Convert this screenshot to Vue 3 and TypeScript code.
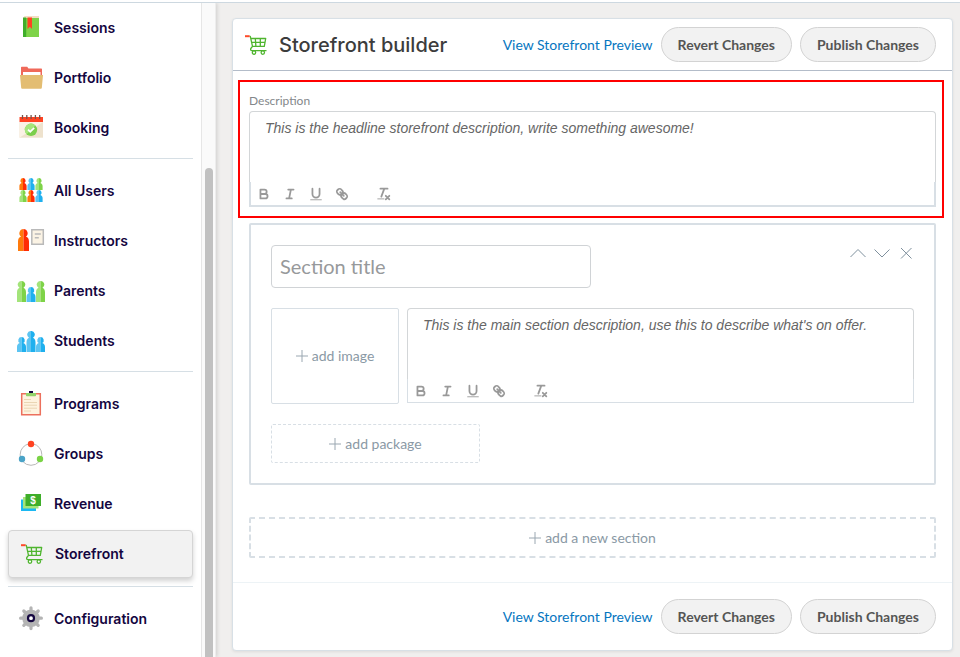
<script setup lang="ts">
import { ref } from 'vue'

interface NavItem {
  label: string
  icon: string
}

const groups: NavItem[][] = [
  [
    { label: 'Sessions', icon: 'sessions' },
    { label: 'Portfolio', icon: 'portfolio' },
    { label: 'Booking', icon: 'booking' },
  ],
  [
    { label: 'All Users', icon: 'users' },
    { label: 'Instructors', icon: 'instructors' },
    { label: 'Parents', icon: 'parents' },
    { label: 'Students', icon: 'students' },
  ],
  [
    { label: 'Programs', icon: 'programs' },
    { label: 'Groups', icon: 'groups' },
    { label: 'Revenue', icon: 'revenue' },
    { label: 'Storefront', icon: 'storefront' },
  ],
  [{ label: 'Configuration', icon: 'configuration' }],
]

const tools = ['bold', 'italic', 'underline', 'link', 'clean']

const current = ref('Storefront')
const headline = ref('')
const sectionTitle = ref('')
const sectionText = ref('')
</script>

<template>
  <svg class="sprite" aria-hidden="true">
    <symbol id="person-short" viewBox="0 0 9 15">
      <path d="M4.500 0a3.300 3.300 0 0 0-1.700 6.100C1 6.700 0 8 0 10v5h4.500z" fill="var(--light)" />
      <path d="M4.500 0a3.300 3.300 0 0 1 1.700 6.100C8 6.700 9 8 9 10v5H4.500z" fill="var(--dark)" />
    </symbol>
    <symbol id="person-tall" viewBox="0 0 9 21">
      <path d="M4.500 0a3.600 3.600 0 0 0-2 6.700C.8 7.400 0 9 0 11.500V21h4.500z" fill="var(--light)" />
      <path d="M4.500 0a3.600 3.600 0 0 1 2 6.700C8.200 7.400 9 9 9 11.500V21H4.500z" fill="var(--dark)" />
    </symbol>
    <symbol id="cart" viewBox="0 0 22 20">
      <path
        d="M4.500 1.300h.8L7.500 11.300l-1.700 2.200q-.6 2.100 1 2.100h14.700M5.700 3.500h15l-1.400 7.800H7.500M6.500 7.300h13.500M10.300 3.500l.6 7.800M15.300 3.500v7.800"
        fill="none" stroke="#4fb52f" stroke-width="1.300" stroke-linejoin="round"
      />
      <g fill="#fff" stroke="#4fb52f" stroke-width="1.300">
        <circle cx="9" cy="17.600" r="1.700" />
        <circle cx="17.800" cy="17.600" r="1.700" />
      </g>
      <path d="M0 1.200h4.600" stroke="#ff4a2a" stroke-width="2" />
    </symbol>

    <symbol id="nav-sessions" viewBox="0 0 28 28">
      <path d="M7.500 2H22v2.500H6z" fill="#f4ddc4" />
      <path d="M6 4h16v19H6z" fill="#7ed348" />
      <path d="M6 3.500h3.200V23H6z" fill="#3fae2a" />
      <path d="M10.500 3.500H15V15l-2.200-2.300-2.300 2.300z" fill="#ff4322" />
    </symbol>
    <symbol id="nav-portfolio" viewBox="0 0 28 28">
      <path d="M4 3.500q0-.7.700-.7h5.500l1.300 1.700h12.800q.7 0 .7.700V14H4z" fill="#f0695a" />
      <path d="M6 8h17.500v4H6z" fill="#fff" />
      <path d="M3 11h23l-1.200 13q-.1.800-1 .8H5.200q-.9 0-1-.8z" fill="#e3bd72" />
    </symbol>
    <symbol id="nav-booking" viewBox="0 0 28 28">
      <path d="M2.500 8H26v15.700H2.500z" fill="#eee2cd" />
      <path d="M2.500 8H26L2.500 23.700z" fill="#fbf2e5" />
      <path d="M2.500 3H26v5H2.500z" fill="#ff4322" />
      <path d="M5.500 1v4M9.800 1v4M14.100 1v4M18.400 1v4M22.700 1v4" stroke="#77534b" stroke-width="1.300" />
      <circle cx="14" cy="15.800" r="6.200" fill="#7ccf4c" />
      <path d="M18.400 11.400a6.200 6.200 0 0 0-8.800 8.800z" fill="#a6e67c" />
      <path d="m11 15.600 2.200 2.100 4-3.900" fill="none" stroke="#fff" stroke-width="1.700" />
    </symbol>
    <symbol id="nav-users" viewBox="0 0 28 28">
      <use class="red" href="#person-short" x="2" y="1" width="8" height="12" />
      <use class="blue" href="#person-short" x="10" y="1" width="8" height="12" />
      <use class="green" href="#person-short" x="18" y="1" width="8" height="12" />
      <use class="green" href="#person-short" x="2" y="13" width="8" height="12" />
      <use class="red" href="#person-short" x="10" y="13" width="8" height="12" />
      <use class="blue" href="#person-short" x="18" y="13" width="8" height="12" />
    </symbol>
    <symbol id="nav-instructors" viewBox="0 0 28 28">
      <path d="M6.500 2a4.200 4.200 0 0 0-2.400 7.600C2 10.300 1 12 1 14.500V24h5.500z" fill="#ff7a0c" />
      <path d="M6.500 2a4.200 4.200 0 0 1 2.400 7.600c2.100.7 3.100 2.400 3.100 4.900V24H6.500z" fill="#ff2c05" />
      <path d="M14.800 2.700h11.500v14.600H14.800z" fill="#fbf3e4" stroke="#b9b9b9" stroke-width="1.500" />
      <path d="M17.800 7h6M17.800 10.800h4" stroke="#b9b9b9" stroke-width="1.400" />
    </symbol>
    <symbol id="nav-parents" viewBox="0 0 28 28">
      <use class="green" href="#person-tall" x="0" y="4" width="9" height="21" />
      <use class="green" href="#person-tall" x="19" y="4" width="9" height="21" />
      <use class="blue" href="#person-short" x="9" y="10" width="10" height="15" />
    </symbol>
    <symbol id="nav-students" viewBox="0 0 28 28">
      <use class="blue" href="#person-short" x="0" y="10" width="9" height="15" />
      <use class="blue" href="#person-short" x="19" y="10" width="9" height="15" />
      <use class="blue" href="#person-tall" x="9" y="4" width="10" height="21" />
    </symbol>
    <symbol id="nav-programs" viewBox="0 0 28 28">
      <path d="M4.700 3.700h18.600v21H4.700z" fill="#fef3df" stroke="#ec705d" stroke-width="1.500" />
      <path d="M9 3h10v2.500q0 .8-.8.800H9.800q-.8 0-.8-.8z" fill="#92d36a" />
      <path d="M12 1h4v2h-4z" fill="#14063f" />
      <path d="M7 9.500h7M7 12.500h13M7 15.200h13M7 18.200h13M7 21h7" stroke="#ead6b4" stroke-width="1" />
    </symbol>
    <symbol id="nav-groups" viewBox="0 0 28 28">
      <circle cx="14" cy="14.500" r="10.800" fill="none" stroke="#b8b8b8" stroke-width="1" stroke-dasharray="18.600 4" stroke-dashoffset="-2" transform="rotate(-90 14 14.500)" />
      <circle cx="14" cy="4" r="3.200" fill="#ff4322" />
      <circle cx="5" cy="19" r="3.200" fill="#4aa3c7" />
      <circle cx="23" cy="19" r="3.200" fill="#7ad345" />
    </symbol>
    <symbol id="nav-revenue" viewBox="0 0 28 28">
      <path d="M4 9.500h15v11.500H4z" fill="#1bb8f2" />
      <path d="M6 7h15.500v11.500H6z" fill="#a5e57b" />
      <path d="M8.500 4H24v12H8.500z" fill="#3fae2a" />
    </symbol>
    <symbol id="nav-storefront" viewBox="0 0 28 28">
      <use href="#cart" x="3" y="4" width="22" height="20" />
    </symbol>
    <symbol id="nav-configuration" viewBox="0 0 28 28">
      <circle cx="14" cy="13.200" r="8.800" fill="#b4b4b4" />
      <path
        d="M14 2.800v20.800M3.600 13.200h20.800M6.800 6l14.400 14.400M21.200 6 6.800 20.400"
        stroke="#b4b4b4" stroke-width="3.200" stroke-linecap="round"
      />
      <circle cx="14" cy="13.200" r="3" fill="#fff" stroke="#14063f" stroke-width="2.200" />
    </symbol>

    <symbol id="tool-bold" viewBox="0 0 18 18">
      <path d="M5 4h4.500a2.500 2.500 0 0 1 0 5H5zM5 9h5.500a2.500 2.500 0 0 1 0 5H5z" />
    </symbol>
    <symbol id="tool-italic" viewBox="0 0 18 18">
      <path d="M7 4h6M5 14h6M8 14l2-10" />
    </symbol>
    <symbol id="tool-underline" viewBox="0 0 18 18">
      <path d="M5 3v6a4 4 0 0 0 8 0V3" />
      <path d="M3 15.500h12" stroke-width="1" />
    </symbol>
    <symbol id="tool-link" viewBox="0 0 18 18">
      <path d="m7 7 4 4" />
      <path d="M8.900 4.577a3.476 3.476 0 0 1 .36 4.679A3.476 3.476 0 0 1 4.577 8.900C3.185 7.500 2.035 6.400 4.217 4.217S7.500 3.185 8.900 4.577Z" />
      <path d="M13.423 9.100a3.476 3.476 0 0 0-4.679-.36 3.476 3.476 0 0 0 .36 4.679c1.392 1.392 2.500 2.542 4.679.36S14.815 10.500 13.423 9.100Z" />
    </symbol>
    <symbol id="tool-clean" viewBox="0 0 18 18">
      <path d="M5 3h8M6 12l3.350-9M11 11l4 4M15 11l-4 4" />
      <path d="M2 14.500h7" stroke-width="1" />
    </symbol>
  </svg>

  <div class="page">
    <aside class="sidebar">
      <nav class="nav" aria-label="Main">
        <ul v-for="(group, index) in groups" :key="index" class="nav-group">
          <li v-for="item in group" :key="item.label">
            <a
              class="nav-link"
              :class="{ active: item.label === current }"
              href="#"
              @click.prevent="current = item.label"
            >
              <svg class="nav-icon" aria-hidden="true">
                <use :href="'#nav-' + item.icon" />
                <text v-if="item.icon === 'revenue'" class="dollar" x="16" y="14" text-anchor="middle">$</text>
              </svg>
              <span>{{ item.label }}</span>
            </a>
          </li>
        </ul>
      </nav>
      <div class="track"><div class="thumb"></div></div>
    </aside>

    <main class="main">
      <section class="card">
        <header class="card-head">
          <svg class="cart" aria-hidden="true"><use href="#cart" /></svg>
          <h1>Storefront builder</h1>
          <div class="actions">
            <a href="#">View Storefront Preview</a>
            <button type="button" class="pill">Revert Changes</button>
            <button type="button" class="pill">Publish Changes</button>
          </div>
        </header>

        <div class="highlight">
          <label class="label" for="headline">Description</label>
          <div class="editor editor-strong">
            <textarea
              id="headline"
              v-model="headline"
              placeholder="This is the headline storefront description, write something awesome!"
            ></textarea>
            <div class="toolbar">
              <button v-for="tool in tools" :key="tool" type="button" class="tool" :class="tool" :aria-label="tool">
                <svg aria-hidden="true"><use :href="'#tool-' + tool" /></svg>
              </button>
            </div>
          </div>
        </div>

        <div class="body">
          <div class="section">
            <div class="section-head">
              <input v-model="sectionTitle" class="title-input" type="text" placeholder="Section title" aria-label="Section title" />
              <div class="section-tools">
                <button type="button" aria-label="Move up">
                  <svg viewBox="0 0 16 16"><path d="m.5 12 7.500-7.500 7.500 7.500" /></svg>
                </button>
                <button type="button" aria-label="Move down">
                  <svg viewBox="0 0 16 16"><path d="m.5 4.500 7.500 7.500 7.500-7.500" /></svg>
                </button>
                <button type="button" aria-label="Remove">
                  <svg viewBox="0 0 16 16"><path d="m3 3 10.500 10.500M13.500 3 3 13.500" /></svg>
                </button>
              </div>
            </div>

            <div class="section-row">
              <button type="button" class="add add-image">
                <svg class="plus" viewBox="0 0 12 12" aria-hidden="true"><path d="M6 0v12M0 6h12" /></svg>
                add image
              </button>
              <div class="editor">
                <textarea
                  v-model="sectionText"
                  aria-label="Section description"
                  placeholder="This is the main section description, use this to describe what's on offer."
                ></textarea>
                <div class="toolbar">
                  <button v-for="tool in tools" :key="tool" type="button" class="tool" :class="tool" :aria-label="tool">
                    <svg aria-hidden="true"><use :href="'#tool-' + tool" /></svg>
                  </button>
                </div>
              </div>
            </div>

            <button type="button" class="add add-package">
              <svg class="plus" viewBox="0 0 12 12" aria-hidden="true"><path d="M6 0v12M0 6h12" /></svg>
              add package
            </button>
          </div>

          <button type="button" class="add add-section">
            <svg class="plus" viewBox="0 0 12 12" aria-hidden="true"><path d="M6 0v12M0 6h12" /></svg>
            add a new section
          </button>
        </div>

        <footer class="card-foot">
          <div class="actions">
            <a href="#">View Storefront Preview</a>
            <button type="button" class="pill">Revert Changes</button>
            <button type="button" class="pill">Publish Changes</button>
          </div>
        </footer>
      </section>
    </main>
  </div>
</template>

<style>
body {
  margin: 0;
  background: #f0efee;
}
</style>

<style scoped>
* {
  box-sizing: border-box;
}

.sprite {
  position: absolute;
  width: 0;
  height: 0;
}

.red {
  --light: #ff7a0c;
  --dark: #ff2c05;
}

.blue {
  --light: #5cc4f2;
  --dark: #1fb0ee;
}

.green {
  --light: #a3e47a;
  --dark: #7ed348;
}

.dollar {
  font: 700 10px 'Liberation Sans', Arial, sans-serif;
  fill: #fff;
}

.page {
  display: flex;
  min-height: 100vh;
  padding-top: 3px;
  background: linear-gradient(#fff 2px, #cdd8e0 2px, #cdd8e0 3px, #f0efee 3px);
  font-family: Lato, Carlito, sans-serif;
}

button,
input,
textarea {
  font-family: inherit;
}

.sidebar {
  display: flex;
  flex: 0 0 216px;
  background: #fff;
  box-shadow: 1px 0 4px rgba(0, 0, 0, 0.14);
  clip-path: inset(0 -6px 0 0);
}

.nav {
  flex: 1;
  padding: 0 8px;
}

.nav-group {
  margin: 0;
  padding: 0 0 5px;
  list-style: none;
}

.nav-group + .nav-group {
  padding-top: 7px;
  border-top: 1px solid #d6dfe5;
}

.nav-link {
  display: flex;
  align-items: center;
  gap: 9px;
  height: 50px;
  padding: 0 9px;
  color: #14063f;
  font: 600 14px/20px Inter, sans-serif;
  text-decoration: none;
}

.nav-link.active {
  height: 48px;
  margin: 1px 0 8px;
  border: 1px solid #d5d5d5;
  border-radius: 4px;
  background: #f2f2f2;
  box-shadow: 0 3px 5px rgba(0, 0, 0, 0.18);
}

.nav-group:has(.active) {
  padding-bottom: 0;
}

.nav-icon {
  flex: none;
  width: 28px;
  height: 28px;
}

.track {
  width: 15px;
  padding: 165px 2px 0 3px;
  border-left: 1px solid #e6e6e6;
  border-right: 1px solid #ededed;
  background: #fafafa;
}

.thumb {
  height: 100%;
  border-radius: 4px 4px 0 0;
  background: #c1c1c1;
}

.main {
  flex: 1;
  min-width: 0;
  padding: 15px 7px 6px 16px;
}

.card {
  border: 1px solid #d8e0e6;
  border-radius: 4px;
  background: #fff;
  box-shadow: 0 1px 3px rgba(0, 0, 0, 0.08);
}

.card-head {
  display: flex;
  align-items: center;
  padding: 8px 16px 8px 12px;
  border-bottom: 1px solid #b3bcc9;
}

.cart {
  width: 22px;
  height: 20px;
}

h1 {
  margin: 0 0 0 12px;
  color: #3c3c3c;
  font: 500 20px/28px Inter, sans-serif;
}

.actions {
  display: flex;
  align-items: center;
  justify-content: flex-end;
  gap: 8px;
  margin-left: auto;
}

.actions a {
  color: #0676bf;
  font-size: 14px;
  line-height: 20px;
  text-decoration: none;
}

.pill {
  height: 35px;
  padding: 0 16px;
  border: 1px solid #d3d3d3;
  border-radius: 18px;
  background: #f2f2f2;
  color: #555;
  font-size: 14px;
  font-weight: 700;
}

.highlight {
  margin: 9px 8px 0 5px;
  padding: 10px 6px 9px 9px;
  border: 2px solid #f00;
}

.label {
  display: block;
  padding-bottom: 1px;
  color: #83878a;
  font-size: 12px;
  line-height: 18px;
}

.editor {
  display: flex;
  flex: 1;
  flex-direction: column;
  height: 96px;
}

textarea {
  display: block;
  flex: 1;
  width: 100%;
  min-height: 0;
  padding: 6px 15px 0;
  border: 1px solid #d3d6d8;
  border-bottom: 0;
  border-radius: 4px 4px 0 0;
  outline: 0;
  background: #fff;
  resize: none;
  color: #333;
  font: 14px/20px 'Liberation Sans', Arial, sans-serif;
}

textarea::placeholder {
  color: #666;
  font-style: italic;
  opacity: 1;
}

.toolbar {
  display: flex;
  height: 24px;
  border: solid #d8dfe5;
  border-width: 0 1px 1px;
}

.editor-strong .toolbar {
  height: 25px;
  border-width: 0 2px 2px;
}

.section-row .editor {
  height: 95px;
}

.tool {
  display: grid;
  place-items: center;
  width: 26px;
  height: 24px;
  padding: 0;
  border: 0;
  background: none;
}

.tool.clean {
  margin-left: 16px;
}

.tool svg {
  width: 16px;
  height: 16px;
  fill: none;
  stroke: #999;
  stroke-width: 2;
  stroke-linecap: round;
  stroke-linejoin: round;
}

.body {
  padding: 5px 16px 24px;
}

.section {
  padding: 20px;
  border: 2px solid #d8dfe5;
  border-radius: 2px;
}

.section-head {
  display: flex;
  align-items: flex-start;
  justify-content: space-between;
}

.title-input {
  width: 320px;
  height: 43px;
  padding: 0 8px 2px;
  border: 1px solid #d0d3d6;
  border-radius: 4px;
  outline: 0;
  color: #333;
  font-size: 20px;
}

.title-input::placeholder {
  color: #97999b;
  opacity: 1;
}

.section-tools {
  display: flex;
  gap: 8px;
}

.section-tools button {
  width: 16px;
  height: 16px;
  padding: 0;
  border: 0;
  background: none;
}

.section-tools svg {
  display: block;
  width: 16px;
  height: 16px;
  fill: none;
  stroke: #7f909d;
  stroke-width: 1;
}

.section-row {
  display: flex;
  gap: 8px;
  margin: 20px 0;
}

.add {
  display: flex;
  align-items: center;
  justify-content: center;
  gap: 4px;
  padding: 0;
  border: 1px solid #d8dfe5;
  border-radius: 2px;
  background: #fff;
  color: #8a99a5;
  font-size: 14px;
  line-height: 20px;
}

.plus {
  width: 12px;
  height: 12px;
  fill: none;
  stroke: #9aa7b1;
  stroke-width: 1;
}

.add-image {
  width: 128px;
  height: 96px;
}

.add-package {
  width: 209px;
  height: 39px;
  border-style: dashed;
}

.add-section {
  width: 100%;
  height: 41px;
  margin-top: 32px;
  border: 2px dashed #d8dfe5;
}

.card-foot {
  padding: 16px;
  border-top: 1px solid #edf3f6;
}
</style>
